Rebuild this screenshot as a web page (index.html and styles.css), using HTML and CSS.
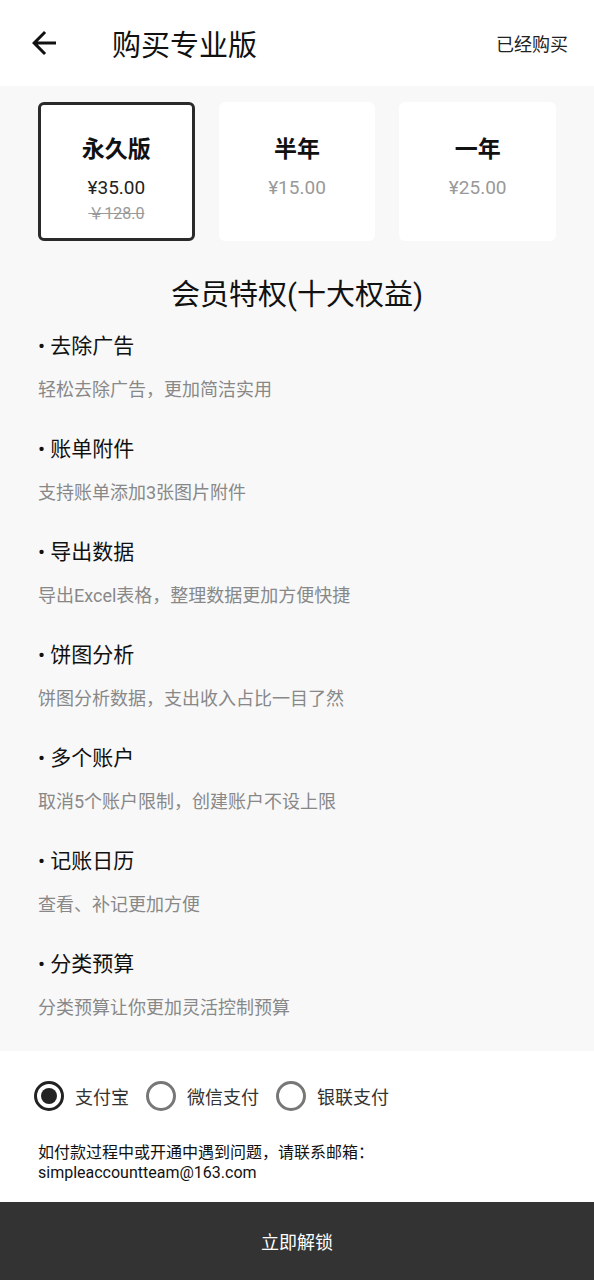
FILE: index.html
```html
<!DOCTYPE html>
<html lang="zh-CN">
<head>
    <meta charset="UTF-8">
    <meta name="viewport" content="width=device-width, initial-scale=1.0">
    <title>购买专业版</title>
    <link rel="stylesheet" href="styles.css">
</head>
<body>

<div class="page">
    <div class="topbar">
        <div class="back">
            <svg width="36" height="36" viewBox="0 0 24 24"><path d="M20 11H7.83l5.59-5.59L12 4l-8 8 8 8 1.41-1.41L7.83 13H20v-2z" fill="#111"/></svg>
        </div>
        <div class="title">购买专业版</div>
        <div class="bought">已经购买</div>
    </div>

    <div class="content">
        <div class="plans">
            <div class="plan selected">
                <div class="plan-name">永久版</div>
                <div class="plan-price">¥35.00</div>
                <div class="plan-old">￥128.0</div>
            </div>
            <div class="plan">
                <div class="plan-name">半年</div>
                <div class="plan-price">¥15.00</div>
            </div>
            <div class="plan">
                <div class="plan-name">一年</div>
                <div class="plan-price">¥25.00</div>
            </div>
        </div>

        <h2 class="perks-title">会员特权(十大权益)</h2>

        <div class="perks">
            <div class="perk">
                <div class="perk-name">• 去除广告</div>
                <div class="perk-desc">轻松去除广告，更加简洁实用</div>
            </div>
            <div class="perk">
                <div class="perk-name">• 账单附件</div>
                <div class="perk-desc">支持账单添加3张图片附件</div>
            </div>
            <div class="perk">
                <div class="perk-name">• 导出数据</div>
                <div class="perk-desc">导出Excel表格，整理数据更加方便快捷</div>
            </div>
            <div class="perk">
                <div class="perk-name">• 饼图分析</div>
                <div class="perk-desc">饼图分析数据，支出收入占比一目了然</div>
            </div>
            <div class="perk">
                <div class="perk-name">• 多个账户</div>
                <div class="perk-desc">取消5个账户限制，创建账户不设上限</div>
            </div>
            <div class="perk">
                <div class="perk-name">• 记账日历</div>
                <div class="perk-desc">查看、补记更加方便</div>
            </div>
            <div class="perk">
                <div class="perk-name">• 分类预算</div>
                <div class="perk-desc">分类预算让你更加灵活控制预算</div>
            </div>
        </div>
    </div>

    <div class="pay">
        <div class="methods">
            <div class="method checked"><span class="radio"></span>支付宝</div>
            <div class="method"><span class="radio"></span>微信支付</div>
            <div class="method"><span class="radio"></span>银联支付</div>
        </div>
        <div class="note">如付款过程中或开通中遇到问题，请联系邮箱：<br>simpleaccountteam@163.com</div>
    </div>

    <div class="unlock">立即解锁</div>
</div>

</body>
</html>
```

FILE: styles.css
```css
body {
    margin: 0;
    font-family: Roboto, "Noto Sans CJK SC", sans-serif;
    background-color: #fff;
    color: #111;
}

.page {
    display: flex;
    flex-direction: column;
    height: 1280px;
}

/* Top bar */
.topbar {
    flex-shrink: 0;
    display: flex;
    align-items: center;
    height: 86px;
    padding: 0 26px 0 26px;
    background: #fff;
}

.back {
    display: flex;
    width: 36px;
    height: 36px;
}

.title {
    margin-left: 50px;
    font-size: 29px;
    flex: 1;
}

.bought {
    font-size: 18px;
    color: #222;
}

/* Content */
.content {
    flex: 1;
    background: #f8f8f8;
    padding: 16px 38px 0 38px;
}

.plans {
    display: flex;
    gap: 24px;
}

.plan {
    box-sizing: border-box;
    flex: 1;
    height: 139px;
    background: #fff;
    border: 3px solid transparent;
    border-radius: 6px;
    display: flex;
    flex-direction: column;
    align-items: center;
    padding-top: 30px;
}

.plan.selected {
    border-color: #2a2a2a;
}

.plan-name {
    font-size: 23px;
    font-weight: bold;
    line-height: 30px;
    color: #111;
}

.plan-price {
    margin-top: 11px;
    font-size: 19px;
    line-height: 24px;
    color: #999;
}

.plan.selected .plan-price {
    color: #222;
}

.plan-old {
    margin-top: 4px;
    font-size: 16px;
    line-height: 20px;
    color: #999;
    text-decoration: line-through;
}

.perks-title {
    margin: 36px 0 0 0;
    text-align: center;
    font-size: 29px;
    font-weight: normal;
    line-height: 36px;
    color: #111;
}

.perks {
    padding-top: 19px;
}

.perk {
    padding-bottom: 34px;
}

.perk:last-child {
    padding-bottom: 32px;
}

.perk-name {
    font-size: 21px;
    line-height: 28px;
    color: #111;
}

.perk-desc {
    margin-top: 18px;
    font-size: 18px;
    line-height: 23px;
    color: #888;
}

/* Payment */
.pay {
    flex-shrink: 0;
    background: #fff;
    padding: 30px 38px 19px 34px;
}

.methods {
    display: flex;
    align-items: center;
}

.method {
    display: flex;
    align-items: center;
    font-size: 18px;
    color: #333;
    margin-right: 17px;
}

.radio {
    box-sizing: border-box;
    width: 30px;
    height: 30px;
    border: 3px solid #777;
    border-radius: 50%;
    margin-right: 11px;
    display: flex;
    justify-content: center;
    align-items: center;
}

.method.checked .radio {
    border-color: #222;
}

.method.checked .radio::after {
    content: "";
    width: 16px;
    height: 16px;
    border-radius: 50%;
    background: #222;
}

.note {
    margin-top: 32px;
    margin-left: 4px;
    font-size: 16px;
    line-height: 20px;
    color: #111;
}

.unlock {
    flex-shrink: 0;
    height: 78px;
    background: #333;
    color: #fff;
    font-size: 18px;
    display: flex;
    justify-content: center;
    align-items: center;
}
```
